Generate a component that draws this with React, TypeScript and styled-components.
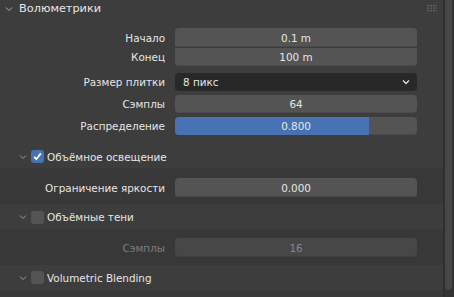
import styled, { createGlobalStyle } from "styled-components";

const GlobalStyle = createGlobalStyle`
  html, body {
    margin: 0;
    padding: 0;
    background: #3d3d3d;
  }
  * { box-sizing: border-box; }
`;

const Frame = styled.div`
  width: 454px;
  height: 297px;
  display: flex;
  overflow: hidden;
  background: #3d3d3d;
  font-family: "DejaVu Sans", "Liberation Sans", sans-serif;
  font-size: 10.4px;
  color: #e6e6e6;
`;

const Panel = styled.div`
  flex: 1;
  display: flex;
  flex-direction: column;
  overflow: hidden;
  border-right: 2px solid #2f2f2f;

  & > * {
    flex-shrink: 0;
  }
`;

const Gutter = styled.div`
  width: 9px;
  padding: 0 2px 7px 0;
  display: flex;
  background: #333;
`;

const ScrollTrack = styled.div`
  flex: 1;
  background: #464646;
  border-radius: 0 0 3px 3px;
`;

const Header = styled.div`
  height: 17px;
  display: flex;
  align-items: center;
  padding: 0 0 0 5px;
  gap: 6px;
  font-size: 11.3px;
`;

const Title = styled.span`
  flex: 1;
`;

const Grip = styled.svg`
  margin-right: 6px;
`;

const Body = styled.div`
  display: flex;
  flex-direction: column;
  padding: 11px 28px 10px 0;
`;

const Row = styled.div<{ $gap?: number }>`
  display: grid;
  grid-template-columns: 165px 242px;
  column-gap: 10px;
  align-items: center;
  margin-top: ${(p) => p.$gap ?? 0}px;
`;

const Label = styled.div<{ $dim?: boolean }>`
  text-align: right;
  white-space: nowrap;
  color: ${(p) => (p.$dim ? "#7d7d7d" : "#e6e6e6")};
`;

const Field = styled.div<{ $pos?: "top" | "bottom" | "single"; $dim?: boolean; $h?: number }>`
  position: relative;
  height: ${(p) => p.$h ?? 18}px;
  display: flex;
  align-items: center;
  justify-content: center;
  background: ${(p) => (p.$dim ? "#474747" : "#545454")};
  color: ${(p) => (p.$dim ? "#888" : "#e6e6e6")};
  box-shadow: inset 0 -1px 0 ${(p) => (p.$dim ? "#404040" : "#4a4a4a")};
  border-radius: ${(p) =>
    p.$pos === "top" ? "4px 4px 0 0" : p.$pos === "bottom" ? "0 0 4px 4px" : "4px"};
  border-top: ${(p) => (p.$pos === "bottom" ? "1px solid #3c3c3c" : "none")};
  overflow: hidden;
`;

const Fill = styled.div`
  position: absolute;
  left: 0;
  top: 0;
  bottom: 0;
  background: #4772b3;
`;

const FieldText = styled.span`
  position: relative;
`;

const Select = styled.div`
  height: 18px;
  display: flex;
  align-items: center;
  justify-content: space-between;
  padding: 0 7px 0 8px;
  background: #282828;
  border-radius: 4px;
  color: #e6e6e6;
`;

const SubHeader = styled.div<{ $h: number }>`
  height: ${(p) => p.$h}px;
  display: flex;
  align-items: center;
  padding-left: 19px;
  gap: 4px;
`;

const SubBody = styled.div<{ $h: number; $top?: number }>`
  height: ${(p) => p.$h}px;
  background: #383838;
  padding: ${(p) => p.$top ?? 10}px 28px 0 0;
`;

const Check = styled.div<{ $on?: boolean }>`
  width: 13px;
  height: 13px;
  border-radius: 3px;
  background: ${(p) => (p.$on ? "#4772b3" : "#545454")};
  display: flex;
  align-items: center;
  justify-content: center;
`;

const SubTitle = styled.span`
  margin-left: -1px;
`;

function Chevron({ color = "#9a9a9a" }: { color?: string }) {
  return (
    <svg width="8" height="6" viewBox="0 0 8 6">
      <path d="M1 1.5 L4 4.5 L7 1.5" fill="none" stroke={color} strokeWidth="1" />
    </svg>
  );
}

function SubPanel({ title, on, h }: { title: string; on?: boolean; h: number }) {
  return (
    <SubHeader $h={h}>
      <Chevron />
      <Check $on={on}>
        {on && (
          <svg width="11" height="11" viewBox="0 0 11 11">
            <path d="M2.2 5.8 L4.4 8.2 L8.8 2.4" fill="none" stroke="#fff" strokeWidth="1.8" />
          </svg>
        )}
      </Check>
      <SubTitle>{title}</SubTitle>
    </SubHeader>
  );
}

export default function App() {
  return (
    <Frame>
      <GlobalStyle />
      <Panel>
        <Header>
          <Chevron color="#b0b0b0" />
          <Title>Волюметрики</Title>
          <Grip width="10" height="7" viewBox="0 0 10 7">
            {[0, 1, 2, 3].map((i) =>
              [0, 1, 2].map((j) => (
                <rect key={`${i}-${j}`} x={i * 3 + 0.5} y={j * 2.5} width="1" height="1.2" fill="#8a8a8a" />
              ))
            )}
          </Grip>
        </Header>
        <Body>
          <Row>
            <Label>Начало</Label>
            <Field $pos="top" $h={19}>0.1 m</Field>
          </Row>
          <Row>
            <Label>Конец</Label>
            <Field $pos="bottom" $h={19}>100 m</Field>
          </Row>
          <Row $gap={7}>
            <Label>Размер плитки</Label>
            <Select>
              <span>8 пикс</span>
              <svg width="8" height="6" viewBox="0 0 8 6">
                <path d="M1 1.5 L4 4.5 L7 1.5" fill="none" stroke="#ddd" strokeWidth="1.3" />
              </svg>
            </Select>
          </Row>
          <Row $gap={4}>
            <Label>Сэмплы</Label>
            <Field>64</Field>
          </Row>
          <Row $gap={4}>
            <Label>Распределение</Label>
            <Field>
              <Fill style={{ width: `${0.8 * 100}%` }} />
              <FieldText>0.800</FieldText>
            </Field>
          </Row>
        </Body>
        <SubPanel title="Объёмное освещение" on h={23} />
        <SubBody $h={36}>
          <Row>
            <Label>Ограничение яркости</Label>
            <Field $h={19}>0.000</Field>
          </Row>
        </SubBody>
        <SubPanel title="Объёмные тени" h={26} />
        <SubBody $h={35} $top={8}>
          <Row>
            <Label $dim>Сэмплы</Label>
            <Field $dim $h={19}>16</Field>
          </Row>
        </SubBody>
        <SubPanel title="Volumetric Blending" h={25} />
        <SubBody $h={7} />
      </Panel>
      <Gutter>
        <ScrollTrack />
      </Gutter>
    </Frame>
  );
}
